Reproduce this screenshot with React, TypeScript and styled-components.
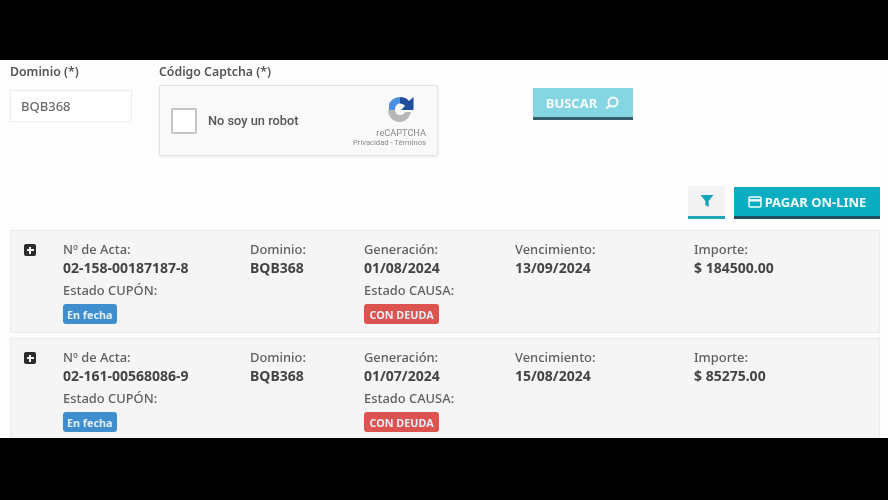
import React from "react";
import styled, { createGlobalStyle } from "styled-components";

const Global = createGlobalStyle`
  html, body { margin: 0; padding: 0; background: #000; }
  body { font-family: "Noto Sans", "Open Sans", sans-serif; }
  * { box-sizing: border-box; }
`;

const Page = styled.div`
  width: 888px;
  height: 500px;
  padding: 60px 0 62px;
  background: #000;
  overflow: hidden;
`;

const Screen = styled.main`
  height: 378px;
  overflow: hidden;
  background: #fdfdfd;
  padding: 4px 8px 0 10px;
  color: #555;
  filter: blur(0.6px);
`;

const FormRow = styled.section`
  display: flex;
  align-items: flex-start;
  height: 122px;
`;

const Field = styled.div<{ $w: number }>`
  width: ${(p) => p.$w}px;
  display: flex;
  flex-direction: column;
`;

const Label = styled.label`
  font-size: 12.3px;
  line-height: 16px;
  font-weight: 600;
  color: #555;
`;

const TextBox = styled.div`
  margin-top: 10px;
  width: 122px;
  height: 32px;
  padding-left: 10px;
  display: flex;
  align-items: center;
  background: #fff;
  border: 1px solid #ececec;
  font-size: 13px;
  font-weight: 500;
  color: #6a6a6a;
`;

const Captcha = styled.div`
  margin-top: 5px;
  width: 279px;
  height: 71px;
  display: flex;
  align-items: center;
  padding: 0 11px;
  background: #f9f9f9;
  border: 1px solid #e3e3e3;
  border-radius: 2px;
  box-shadow: 0 1px 3px rgba(0, 0, 0, 0.08);
`;

const CheckBox = styled.span`
  width: 26px;
  height: 26px;
  background: #fff;
  border: 2px solid #c4c4c4;
  border-radius: 2px;
`;

const CaptchaText = styled.span`
  margin-left: 11px;
  flex: 1;
  font-family: Roboto, sans-serif;
  font-size: 12.8px;
  font-weight: 500;
  color: #555;
`;

const CaptchaBrand = styled.div`
  align-self: flex-start;
  margin-top: 10px;
  display: flex;
  flex-direction: column;
  align-items: flex-end;
  font-family: Roboto, sans-serif;
  color: #8a8a8a;
`;

const BrandIcon = styled.svg`
  width: 28px;
  height: 27px;
  margin-right: 11px;
`;

const BrandName = styled.span`
  font-size: 9.2px;
  line-height: 11px;
  margin-top: 4px;
`;

const BrandLinks = styled.span`
  font-size: 7.6px;
  line-height: 10px;
  white-space: nowrap;
`;

const ActionButton = styled.button<{ $bg: string; $edge: string; $w: number }>`
  width: ${(p) => p.$w}px;
  height: 32px;
  padding: 0;
  display: flex;
  align-items: center;
  justify-content: center;
  background: ${(p) => p.$bg};
  border: 0;
  border-bottom: 3px solid ${(p) => p.$edge};
  color: #f4fbfc;
  font-family: "Noto Sans", sans-serif;
  font-size: 13px;
  font-weight: 700;
`;

const SearchSlot = styled.div`
  margin: 24px 0 0 0;
`;

const Toolbar = styled.section`
  display: flex;
  justify-content: flex-end;
  align-items: flex-end;
  gap: 9px;
  height: 44px;
  padding-bottom: 11px;
`;

const FilterButton = styled.button`
  width: 37px;
  height: 33px;
  padding: 0;
  display: flex;
  align-items: center;
  justify-content: center;
  background: #f3f3f3;
  border: 0;
  border-bottom: 3px solid #21a6b8;
`;

const Card = styled.article`
  width: 870px;
  height: 103px;
  margin-bottom: 5px;
  padding: 8px 0 0 13px;
  display: grid;
  grid-template-columns: 39px 187px 114px 151px 179px 1fr;
  background: #f5f5f5;
  border: 1px solid #ebebeb;
`;

const Expand = styled.span`
  margin-top: 5px;
  width: 12px;
  height: 12px;
  border-radius: 2px;
  background: #2b2b2b;
  position: relative;
  &::before, &::after {
    content: "";
    position: absolute;
    background: #f5f5f5;
  }
  &::before { left: 2.5px; right: 2.5px; top: 5px; height: 2px; }
  &::after { top: 2.5px; bottom: 2.5px; left: 5px; width: 2px; }
`;

const Col = styled.div`
  display: flex;
  flex-direction: column;
  align-items: flex-start;
`;

const Key = styled.span`
  font-size: 12.9px;
  line-height: 20px;
  font-weight: 500;
  color: #5f5f5f;
  white-space: nowrap;
`;

const Value = styled.span`
  font-size: 14px;
  line-height: 18px;
  margin-bottom: 3px;
  font-weight: 700;
  color: #444;
  white-space: nowrap;
`;

const Badge = styled.span<{ $bg: string; $pad: number }>`
  margin-top: 4px;
  height: 20px;
  padding: 0 ${(p) => p.$pad}px;
  display: flex;
  align-items: center;
  border-radius: 3px;
  background: ${(p) => p.$bg};
  color: #e3eff8;
  font-size: 10.8px;
  font-weight: 700;
`;

type Row = { acta: string; gen: string; venc: string; imp: string };

const rows: Row[] = [
  { acta: "02-158-00187187-8", gen: "01/08/2024", venc: "13/09/2024", imp: "$ 184500.00" },
  { acta: "02-161-00568086-9", gen: "01/07/2024", venc: "15/08/2024", imp: "$ 85275.00" },
];

export default function App() {
  return (
    <Page>
      <Global />
      <Screen>
        <FormRow>
          <Field $w={149}>
            <Label>Dominio (*)</Label>
            <TextBox>BQB368</TextBox>
          </Field>
          <Field $w={374}>
            <Label>Código Captcha (*)</Label>
            <Captcha>
              <CheckBox />
              <CaptchaText>No soy un robot</CaptchaText>
              <CaptchaBrand>
                <BrandIcon viewBox="0 0 28 27">
                  <path d="M13 1 C8 1 4 4 2 8 V14 H8 C8 10 10 7.5 13 7.5 Z" fill="#4a8fe0" />
                  <path d="M13 1 C17 1 20 2.5 22 5 L26.5 1 V14 H14 L18 10 C17 8.5 15 7.5 13 7.5 Z" fill="#1f4f9c" />
                  <path d="M1 14 H8 C8.5 17 10 19 13 19 C15.5 19 17 18 18 16 H24 C22.5 22 18 26 13 26 C6 26 1 21 1 14 Z" fill="#b8b8b8" />
                </BrandIcon>
                <BrandName>reCAPTCHA</BrandName>
                <BrandLinks>Privacidad - Términos</BrandLinks>
              </CaptchaBrand>
            </Captcha>
          </Field>
          <SearchSlot>
            <ActionButton $bg="#85d5e3" $edge="#34606c" $w={100}>
              BUSCAR
              <svg width="16" height="16" viewBox="0 0 16 16" style={{ marginLeft: 7 }}>
                <circle cx="9" cy="7" r="4.5" fill="none" stroke="#f4fbfc" strokeWidth="2" />
                <path d="M5.5 10.5 L2.5 13.5" stroke="#f4fbfc" strokeWidth="2" />
              </svg>
            </ActionButton>
          </SearchSlot>
        </FormRow>
        <Toolbar>
          <FilterButton aria-label="Filtrar">
            <svg width="14" height="14" viewBox="0 0 14 14">
              <path d="M0.5 1 H13.5 L8.7 7 V13 L5.3 11 V7 Z" fill="#17a5ba" />
            </svg>
          </FilterButton>
          <ActionButton $bg="#0badc1" $edge="#20525e" $w={146}>
            <svg width="14" height="12" viewBox="0 0 15 13" style={{ marginRight: 3 }}>
              <rect x="1" y="1" width="13" height="11" rx="1.5" fill="none" stroke="#f4fbfc" strokeWidth="1.6" />
              <rect x="1" y="3.4" width="13" height="2.6" fill="#f4fbfc" />
            </svg>
            PAGAR ON-LINE
          </ActionButton>
        </Toolbar>
        {rows.map((r) => (
          <Card key={r.acta}>
            <Expand />
            <Col>
              <Key>Nº de Acta:</Key>
              <Value>{r.acta}</Value>
              <Key>Estado CUPÓN:</Key>
              <Badge $bg="#3f8fce" $pad={4}>En fecha</Badge>
            </Col>
            <Col>
              <Key>Dominio:</Key>
              <Value>BQB368</Value>
            </Col>
            <Col>
              <Key>Generación:</Key>
              <Value>{r.gen}</Value>
              <Key>Estado CAUSA:</Key>
              <Badge $bg="#dc5350" $pad={5.5}>CON DEUDA</Badge>
            </Col>
            <Col>
              <Key>Vencimiento:</Key>
              <Value>{r.venc}</Value>
            </Col>
            <Col>
              <Key>Importe:</Key>
              <Value>{r.imp}</Value>
            </Col>
          </Card>
        ))}
      </Screen>
    </Page>
  );
}
